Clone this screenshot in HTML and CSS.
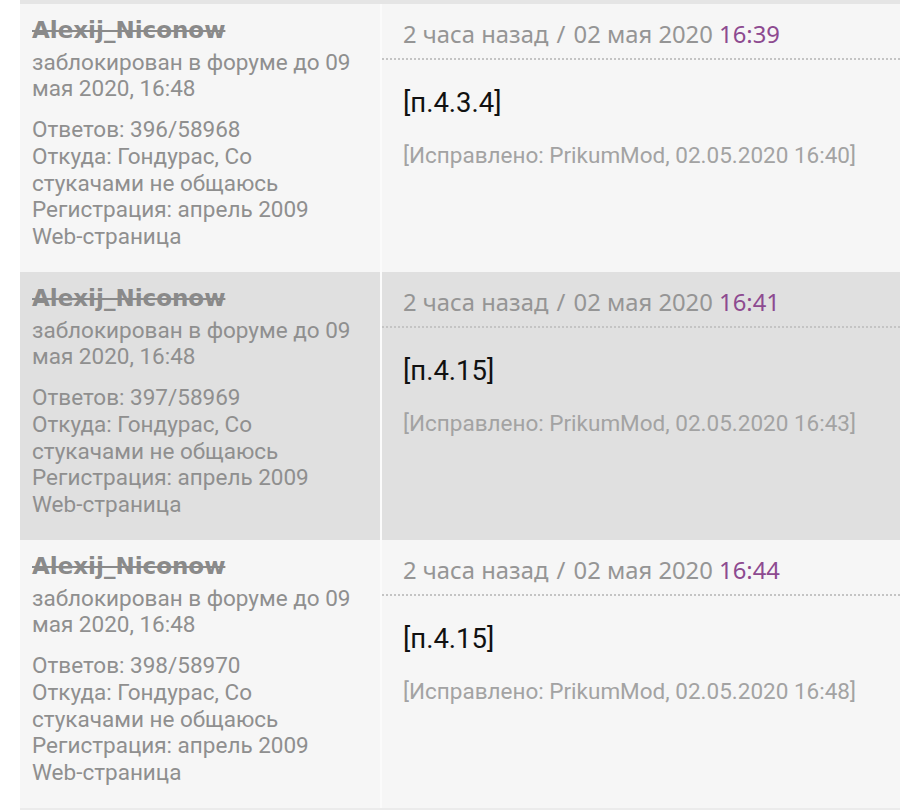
FILE: index.html
```html
<!DOCTYPE html>
<html lang="ru">
<head>
<meta charset="utf-8">
<link rel="stylesheet" href="styles.css">
</head>
<body>
<div class="thread">
  <div class="post">
    <div class="author">
      <div class="name">Alexij_Niconow</div>
      <div class="ban">заблокирован в форуме до 09 мая 2020, 16:48</div>
      <div class="stats">Ответов: 396/58968<br>Откуда: Гондурас, Со стукачами не общаюсь<br>Регистрация: апрель 2009<br>Web-страница</div>
    </div>
    <div class="body">
      <div class="head">2 часа назад <span class="sep">/</span> 02 мая 2020 <span class="time">16:39</span></div>
      <div class="text">[п.4.3.4]</div>
      <div class="edit">[Исправлено: PrikumMod, 02.05.2020 16:40]</div>
    </div>
  </div>
  <div class="post alt">
    <div class="author">
      <div class="name">Alexij_Niconow</div>
      <div class="ban">заблокирован в форуме до 09 мая 2020, 16:48</div>
      <div class="stats">Ответов: 397/58969<br>Откуда: Гондурас, Со стукачами не общаюсь<br>Регистрация: апрель 2009<br>Web-страница</div>
    </div>
    <div class="body">
      <div class="head">2 часа назад <span class="sep">/</span> 02 мая 2020 <span class="time">16:41</span></div>
      <div class="text">[п.4.15]</div>
      <div class="edit">[Исправлено: PrikumMod, 02.05.2020 16:43]</div>
    </div>
  </div>
  <div class="post">
    <div class="author">
      <div class="name">Alexij_Niconow</div>
      <div class="ban">заблокирован в форуме до 09 мая 2020, 16:48</div>
      <div class="stats">Ответов: 398/58970<br>Откуда: Гондурас, Со стукачами не общаюсь<br>Регистрация: апрель 2009<br>Web-страница</div>
    </div>
    <div class="body">
      <div class="head">2 часа назад <span class="sep">/</span> 02 мая 2020 <span class="time">16:44</span></div>
      <div class="text">[п.4.15]</div>
      <div class="edit">[Исправлено: PrikumMod, 02.05.2020 16:48]</div>
    </div>
  </div>
</div>
</body>
</html>
```

FILE: styles.css
```css
html, body {
  margin: 0;
  padding: 0;
  background: #ffffff;
}
.thread {
  margin-left: 20px;
  border-top: 4px solid #e5e5e5;
  border-bottom: 2px solid #ebebeb;
}
.post {
  display: grid;
  grid-template-columns: 360px 1fr;
  height: 268px;
  background: #f6f6f6;
}
.post.alt {
  background: #e0e0e0;
}
.author {
  padding: 13px 12px 0 12px;
  font-family: Roboto, "Liberation Sans", sans-serif;
  font-size: 22.5px;
  line-height: 26.7px;
  color: #8f8f8f;
}
.name {
  font-family: "DejaVu Sans", Verdana, sans-serif;
  font-size: 23px;
  font-weight: bold;
  text-decoration: line-through;
  color: #8a8a8a;
  margin-bottom: 5px;
}
.ban {
  margin-bottom: 14px;
}
.body {
  border-left: 2px solid #fbfbfb;
}
.head {
  padding: 16px 21px 10px 21px;
  font-family: "Noto Sans", "Open Sans", sans-serif;
  font-size: 23.8px;
  line-height: 28px;
  color: #959595;
  border-bottom: 2px dotted #c4c4c4;
  white-space: nowrap;
}
.sep {
  margin: 0 2px;
}
.time {
  color: #8d4a90;
}
.text {
  margin: 28px 21px 0 21px;
  font-family: Roboto, "Liberation Sans", sans-serif;
  font-size: 27.5px;
  line-height: 30px;
  color: #111111;
}
.edit {
  margin: 24px 21px 0 21px;
  font-family: Roboto, "Liberation Sans", sans-serif;
  font-size: 22.5px;
  line-height: 26px;
  color: #a3a3a3;
  white-space: nowrap;
}
```
